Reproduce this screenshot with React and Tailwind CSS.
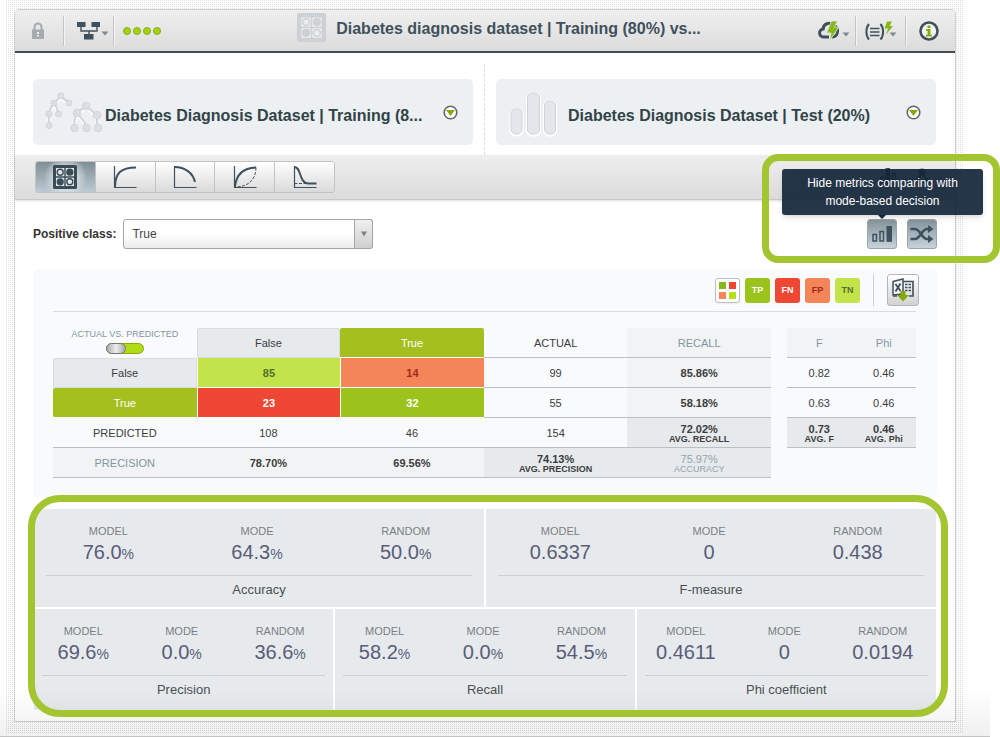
import React, { useState } from 'react';

// --- Icons ---
const LockIcon = () => (
  <svg width="14" height="18" viewBox="0 0 14 18">
    <path d="M3.500 8V5a3.500 3.500 0 0 1 7 0v3" fill="none" stroke="#a6abae" strokeWidth="2" />
    <rect x="1" y="7.500" width="12" height="9.500" rx="0.500" fill="#a6abae" />
    <path d="M6 10h2v2H6zM6 13h2v1.500H6z" fill="#eee" />
  </svg>
);

const NetworkIcon = () => (
  <svg width="26" height="20" viewBox="0 0 26 20">
    <path d="M5 4v6h16V4M13 10v4" fill="none" stroke="#3f515c" strokeWidth="1.400" />
    <path d="M1 1h8.500v5H1zM15.500 1H24v5h-8.500zM8 13h9.500v5.500H8z" fill="#3f515c" />
  </svg>
);

const Caret = () => (
  <svg width="8" height="5" viewBox="0 0 8 5">
    <path d="M0.500 0.500h7L4 4.500z" fill="#7a8a94" />
  </svg>
);

const MatrixIcon = ({ color, light, size }) => (
  <svg width={size} height={size} viewBox="0 0 24 24">
    <rect x="0" y="0" width="24" height="24" rx="1.500" fill={color} />
    <path d="M3 3h8.300v8.300H3zM12.700 3H21v8.300h-8.300zM3 12.700h8.300V21H3zM12.700 12.700H21V21h-8.300z" fill={light} />
    <circle cx="7.200" cy="7.200" r="3" fill={light} stroke={color} strokeWidth="1.400" />
    <circle cx="16.800" cy="7.200" r="3.600" fill={color} />
    <circle cx="7.200" cy="16.800" r="3.600" fill={color} />
    <circle cx="16.800" cy="16.800" r="3" fill={light} stroke={color} strokeWidth="1.400" />
  </svg>
);

const CloudIcon = () => (
  <svg width="24" height="22" viewBox="0 0 24 22">
    <path d="M11 17H6a4 4 0 0 1-.8-8A5.500 5.500 0 0 1 15 5.500a5 5 0 0 1 4.500 6c0 3-2 5.500-5.500 5.500" fill="none" stroke="#3f515c" strokeWidth="3" />
    <path d="M13.500 1h6l-3 6H21L11.500 21l1.500-8H8.500z" fill="#86b817" stroke="#e8e8e8" strokeWidth="0.800" />
  </svg>
);

const FormulaIcon = () => (
  <svg width="28" height="22" viewBox="0 0 28 22">
    <path d="M4 4c-3.500 4-3.500 11.500 0 15.500M15.500 4c3.500 4 3.500 11.500 0 15.500" fill="none" stroke="#3f515c" strokeWidth="2" />
    <path d="M5 8.500h9.500M5 12h9.500M5 15.500h9.500" stroke="#3f515c" strokeWidth="1.600" />
    <path d="M22 1.500h5L24.500 6H28l-7 8.500L23 8.500h-3.500z" fill="#86b817" />
  </svg>
);

const InfoIcon = () => (
  <svg width="20" height="20" viewBox="0 0 20 20">
    <circle cx="10" cy="10" r="8.500" fill="#f4f4f4" stroke="#3f515c" strokeWidth="2.600" />
    <path d="M8.500 4.500h3v2.500h-3zM7 8h4.500v5.800H13v1.700H7v-1.700h1.500v-4H7z" fill="#86a817" />
  </svg>
);

const EnsembleIcon = () => (
  <svg width="60" height="46" viewBox="0 0 60 46">
    <g fill="none" stroke="#fff" strokeWidth="4">
      <path d="M16 6L9 13C5 18 4 21 4 24v11M16 6l8 7M9 13c3 4 4 7 4.500 11M41 16l-9 7.500c-3 5-3 9-3 14.500M32 23.500C37 28 41 32 41.500 38M41 16l11 9v13" />
    </g>
    <g fill="none" stroke="#d3d6da" strokeWidth="2.400">
      <path d="M16 5L9 12C5 17 4 20 4 23v11M16 5l8 7M9 12c3 4 4 7 4.500 11M41 15l-9 7c-3 5-3 9-3 14.500M32 22C37 28 41 31 41.500 37M41 15l11 9v13" />
    </g>
    <g fill="#dcdee3" stroke="#cdd0d5" strokeWidth="0.800">
      <circle cx="16" cy="5" r="3" />
      <circle cx="24" cy="12" r="3" />
      <circle cx="9" cy="12" r="3" />
      <circle cx="4" cy="23" r="3" />
      <circle cx="13.500" cy="23" r="3" />
      <circle cx="4" cy="34.500" r="3" />
      <circle cx="41" cy="15" r="3.800" />
      <circle cx="32" cy="22" r="3.800" />
      <circle cx="52" cy="24" r="3.800" />
      <circle cx="29.500" cy="37" r="3.800" />
      <circle cx="41.500" cy="37" r="3.800" />
      <circle cx="53" cy="37" r="3.800" />
    </g>
  </svg>
);

const DatasetIcon = () => (
  <svg width="60" height="46" viewBox="1 2 60 46">
    <g fill="#e3e6eb" stroke="#fff" strokeWidth="3">
      <rect x="4" y="21" width="11" height="25" rx="4.500" />
      <rect x="20.500" y="4.500" width="12" height="41.500" rx="4.500" />
      <rect x="37.500" y="12.500" width="11" height="33.500" rx="4.500" />
    </g>
    <g fill="#e3e6eb" stroke="#cfd2d6" strokeWidth="1">
      <rect x="4" y="20" width="11" height="25" rx="4.500" />
      <rect x="20.500" y="4" width="12" height="41" rx="4.500" />
      <rect x="37.500" y="12" width="11" height="33" rx="4.500" />
    </g>
  </svg>
);

const CircleCaret = () => (
  <svg width="15" height="15" viewBox="0 0 15 15">
    <circle cx="7.500" cy="7.500" r="6.300" fill="#fff" stroke="#666" strokeWidth="1.600" />
    <path d="M3 5h9l-4.500 6z" fill="#86a80f" />
  </svg>
);

const CHARTS = {
  roc: <path d="M2 22C2 8 8 2.500 23 2.500" strokeWidth="2" />,
  pr: <path d="M1.500 2C12 2 20 8 22 17" strokeWidth="2" />,
  ks: (
    <>
      <path d="M2 22C3 10 9 3 23 2.500" strokeWidth="2" />
      <path d="M23 2.500C23 14 16 22 2 22" strokeWidth="1" strokeDasharray="3 1.500" />
    </>
  ),
  lift: (
    <>
      <path d="M1.500 2c7 0 4 16 14 16.500h8" strokeWidth="2" />
      <path d="M1.500 18.500h14" strokeWidth="1" strokeDasharray="3 1.500" />
    </>
  ),
};

const ChartIcon = ({ kind }) => (
  <svg width="24" height="24" viewBox="0 0 24 24" fill="none" stroke="#3f515c">
    <path d="M1.500 1v21.500h22" strokeWidth="1.200" />
    {CHARTS[kind]}
  </svg>
);

const BarsIcon = () => (
  <svg width="22" height="18" viewBox="0 0 22 18">
    <path d="M2 9.500h3.500v6.500H2zM9 6.500h3.500V16H9z" fill="none" stroke="#3f515c" strokeWidth="1.500" />
    <path d="M15.500 1H21v15.800h-5.500z" fill="#3f515c" />
  </svg>
);

const ShuffleIcon = () => (
  <svg width="24" height="18" viewBox="0 0 24 18" fill="none" stroke="#3f515c" strokeWidth="2.600">
    <path d="M0.500 4H5c5 0 7 10 12 10h2M0.500 14H5c5 0 7-10 12-10h2" />
    <path d="M18 0l5.500 4L18 8zM18 10l5.500 4-5.500 4z" fill="#3f515c" stroke="none" />
  </svg>
);

const ExportIcon = () => (
  <svg width="24" height="24" viewBox="0 0 24 24">
    <path d="M12 3.500h10V18h-4M6 18H2" fill="none" stroke="#3f515c" strokeWidth="1.600" />
    <path d="M14 6.500h2.500M14 9.500h2.500M14 12.500h2.500M17.500 6.500H20M17.500 9.500H20M17.500 12.500H20" stroke="#3f515c" strokeWidth="1.400" />
    <path d="M2 3.500L12 1v15l-10 1z" fill="#f2f2f2" stroke="#3f515c" strokeWidth="1.500" />
    <path d="M4.500 6l5 7M9.500 5.500l-5 8" stroke="#3f515c" strokeWidth="1.800" />
    <path d="M9.500 13h5v4h3.500L12 23.500 6 17h3.500z" fill="#86a80f" />
  </svg>
);

// --- Data ---
const METRICS_TOP = [
  { title: 'Accuracy', model: '76.0', mode: '64.3', random: '50.0', percent: true },
  { title: 'F-measure', model: '0.6337', mode: '0', random: '0.438' },
];

const METRICS_BOTTOM = [
  { title: 'Precision', model: '69.6', mode: '0.0', random: '36.6', percent: true },
  { title: 'Recall', model: '58.2', mode: '0.0', random: '54.5', percent: true },
  { title: 'Phi coefficient', model: '0.4611', mode: '0', random: '0.0194' },
];

const LEGEND = [
  { label: 'TP', style: 'bg-[#9cc31c] text-white' },
  { label: 'FN', style: 'bg-[#ee4733] text-white' },
  { label: 'FP', style: 'bg-[#f48559] text-[#a5281c]' },
  { label: 'TN', style: 'bg-[#c2e34a] text-[#56702a]' },
];

const TABS = [
  { id: 'matrix', label: 'Confusion matrix' },
  { id: 'roc', label: 'ROC curve' },
  { id: 'pr', label: 'Precision-recall curve' },
  { id: 'ks', label: 'Gain curve' },
  { id: 'lift', label: 'Lift curve' },
];

// --- Subcomponents ---
const Divider = () => <span className="h-[30px] w-0.5 border-l border-[#c4c4c4] bg-[#f4f4f4]" />;

const SourceCard = ({ icon, title }) => (
  <div className="flex h-[66px] min-w-0 flex-1 items-center rounded-[5px] bg-[#ecf0f3] pr-[15px] pl-3">
    <span className="shrink-0 pt-1">{icon}</span>
    <h2 className="min-w-0 flex-1 truncate pt-2 text-[16px] leading-5 font-bold text-[#324347]">{title}</h2>
    <button type="button" aria-label="Change source" className="shrink-0"><CircleCaret /></button>
  </div>
);

const Metric = ({ label, value, percent }) => (
  <div className="flex-1 text-center">
    <p className="text-[11px] leading-4 text-[#7c7f82]">{label}</p>
    <p className="text-[20px] leading-[26px] text-[#5a5c78]">
      {value}
      {percent && <span className="text-[14px] leading-none">%</span>}
    </p>
  </div>
);

const MetricCard = ({ metric, wide }) => (
  <section className={wide ? 'h-[98px] bg-[#e6eaed] pt-3.5' : 'h-[101px] bg-[#e6eaed] pt-3.5'}>
    <div className="flex pr-1">
      <Metric label="MODEL" value={metric.model} percent={metric.percent} />
      <Metric label="MODE" value={metric.mode} percent={metric.percent} />
      <Metric label="RANDOM" value={metric.random} percent={metric.percent} />
    </div>
    <h3 className={wide
      ? 'mx-3 mt-2.5 border-t border-[#cbd0d4] text-center text-[13px] leading-7 text-[#4c4f52]'
      : 'mx-2 mt-2.5 border-t border-[#cbd0d4] text-center text-[13px] leading-7 text-[#4c4f52]'}
    >
      {metric.title}
    </h3>
  </section>
);

const Summary = ({ value, label }) => (
  <>
    <span className="block text-[11px] leading-3">{value}</span>
    <span className="block text-[9px] leading-[8px]">{label}</span>
  </>
);

const CELL = 'h-[30px] p-0 text-center align-middle text-[11px] leading-4';
const LINE = 'border-b border-[#bdbfc1]';

const ConfusionTable = ({ swapped, setSwapped }) => (
  <table className="w-full table-fixed border-separate border-spacing-0 text-[#3c3c3c]">
    <tbody>
      <tr>
        <td className="h-[30px] p-0 text-center align-top">
          <label htmlFor="swap" className="block text-[9px] leading-3 text-[#83969f]">ACTUAL VS. PREDICTED</label>
          <input
            id="swap"
            type="checkbox"
            checked={swapped}
            onChange={(e) => setSwapped(e.target.checked)}
            className="mx-auto mt-[3px] block h-[11px] w-[38px] appearance-none rounded-full border border-[#8ba60f] bg-[#b0dc16] before:-mt-px before:-ml-px before:block before:h-[11px] before:w-5 before:rounded-full before:border before:border-[#777] before:bg-linear-to-r before:from-[#aaa] before:via-[#eee] before:to-[#aaa] checked:before:ml-[17px]"
          />
        </td>
        <th scope="col" className={`${CELL} rounded-t-xs border border-[#d9dbdc] bg-[#e6eaed] font-normal`}>False</th>
        <th scope="col" className={`${CELL} rounded-t-xs border-b border-white bg-[#a5bf1e] font-normal text-white`}>True</th>
        <th scope="col" className={`${CELL} ${LINE} font-normal`}>ACTUAL</th>
        <th scope="col" className={`${CELL} ${LINE} bg-[#f1f3f4] font-normal text-[#83969f]`}>RECALL</th>
      </tr>
      <tr>
        <th scope="row" className={`${CELL} rounded-l-xs border border-[#d9dbdc] bg-[#e6eaed] font-normal`}>False</th>
        <td className={`${CELL} border-b border-l border-white bg-[#c2e34a] font-bold text-[#56702a]`}>85</td>
        <td className={`${CELL} border-b border-l border-white bg-[#f48559] font-bold text-[#a5281c]`}>14</td>
        <td className={`${CELL} ${LINE}`}>99</td>
        <td className={`${CELL} ${LINE} bg-[#f1f3f4] font-bold`}>85.86%</td>
      </tr>
      <tr>
        <th scope="row" className={`${CELL} rounded-l-xs border-b border-white bg-[#a5bf1e] font-normal text-white`}>True</th>
        <td className={`${CELL} border-b border-l border-white bg-[#ee4733] font-bold text-white`}>23</td>
        <td className={`${CELL} border-b border-l border-white bg-[#9cc31c] font-bold text-white`}>32</td>
        <td className={`${CELL} ${LINE}`}>55</td>
        <td className={`${CELL} ${LINE} bg-[#f1f3f4] font-bold`}>58.18%</td>
      </tr>
      <tr>
        <th scope="row" className={`${CELL} ${LINE} font-normal`}>PREDICTED</th>
        <td className={`${CELL} ${LINE}`}>108</td>
        <td className={`${CELL} ${LINE}`}>46</td>
        <td className={`${CELL} ${LINE}`}>154</td>
        <td className={`${CELL} ${LINE} bg-[#e6eaed] font-bold`}><Summary value="72.02%" label="AVG. RECALL" /></td>
      </tr>
      <tr>
        <th scope="row" className={`${CELL} ${LINE} bg-[#f1f3f4] font-normal text-[#83969f]`}>PRECISION</th>
        <td className={`${CELL} ${LINE} bg-[#f1f3f4] font-bold`}>78.70%</td>
        <td className={`${CELL} ${LINE} bg-[#f1f3f4] font-bold`}>69.56%</td>
        <td className={`${CELL} ${LINE} bg-[#e6eaed] font-bold`}><Summary value="74.13%" label="AVG. PRECISION" /></td>
        <td className={`${CELL} ${LINE} bg-[#e6eaed] text-[#94a3ab]`}><Summary value="75.97%" label="ACCURACY" /></td>
      </tr>
    </tbody>
  </table>
);

const ScoreTable = () => (
  <table className="w-[129px] shrink-0 table-fixed border-separate border-spacing-0 text-[#3c3c3c]">
    <tbody>
      <tr>
        <th scope="col" className={`${CELL} ${LINE} bg-[#f1f3f4] font-normal text-[#83969f]`}>F</th>
        <th scope="col" className={`${CELL} ${LINE} bg-[#f1f3f4] font-normal text-[#83969f]`}>Phi</th>
      </tr>
      <tr>
        <td className={`${CELL} ${LINE}`}>0.82</td>
        <td className={`${CELL} ${LINE}`}>0.46</td>
      </tr>
      <tr>
        <td className={`${CELL} ${LINE}`}>0.63</td>
        <td className={`${CELL} ${LINE}`}>0.46</td>
      </tr>
      <tr>
        <td className={`${CELL} ${LINE} bg-[#e6eaed] font-bold`}><Summary value="0.73" label="AVG. F" /></td>
        <td className={`${CELL} ${LINE} bg-[#e6eaed] font-bold`}><Summary value="0.46" label="AVG. Phi" /></td>
      </tr>
    </tbody>
  </table>
);

const METRIC_BUTTON = 'flex size-[30px] items-center justify-center rounded-[3px] border border-[#9aa5aa] bg-linear-to-b from-[#85949a] to-[#c6d3db]';

// --- Main component ---
function App() {
  const [tab, setTab] = useState('matrix');
  const [positiveClass, setPositiveClass] = useState('True');
  const [swapped, setSwapped] = useState(false);

  return (
    <div className="relative bg-white pb-1 font-['Liberation_Sans',Arial,sans-serif]">
      <div className="mr-9 ml-[5px] bg-[conic-gradient(#dfdfdf_25%,#fff_25%)] bg-size-[2px_2px] pt-[9px] pr-2 pb-[11px] pl-[9px]">
        <main className="rounded-t-[5px] border border-[#cfcfcf] bg-white">
          <header className="flex h-[43px] items-center rounded-t-[4px] border-b-2 border-[#414c56] bg-linear-to-b from-[#efefef] to-[#dcdcdc]">
            <div className="flex w-[164px] shrink-0 items-center pl-4">
              <button type="button" aria-label="Privacy"><LockIcon /></button>
              <span className="w-[18px]" />
              <Divider />
              <button type="button" aria-label="Workflow" className="flex items-center pl-[11px]">
                <NetworkIcon />
                <span className="-ml-px pt-1.5"><Caret /></span>
              </button>
              <span className="w-1" />
              <Divider />
              <span className="flex gap-0.5 pl-2">
                <i className="size-2 rounded-full border border-[#8cab22] bg-[#a3d30c]" />
                <i className="size-2 rounded-full border border-[#8cab22] bg-[#a3d30c]" />
                <i className="size-2 rounded-full border border-[#8cab22] bg-[#a3d30c]" />
                <i className="size-2 rounded-full border border-[#8cab22] bg-[#a3d30c]" />
              </span>
            </div>
            <div className="flex min-w-0 flex-1 items-center justify-center gap-2.5 pb-1.5 pl-1">
              <span className="flex size-[29px] shrink-0 items-center justify-center rounded-xs bg-[#cdd1d4]">
                <MatrixIcon color="#cdd1d4" light="#eceded" size={27} />
              </span>
              <h1 className="truncate pt-0.5 text-[16px] leading-5 font-bold text-[#3f515c]">Diabetes diagnosis dataset | Training (80%) vs...</h1>
            </div>
            <div className="flex w-[140px] shrink-0 items-center pl-[3px]">
              <button type="button" aria-label="Cloud actions" className="flex items-center">
                <CloudIcon />
                <span className="pt-2"><Caret /></span>
              </button>
              <span className="w-[5px]" />
              <Divider />
              <button type="button" aria-label="Formula actions" className="flex items-center pl-2">
                <FormulaIcon />
                <span className="-ml-1 pt-2"><Caret /></span>
              </button>
              <span className="w-2" />
              <Divider />
              <button type="button" aria-label="Information" className="pl-3"><InfoIcon /></button>
            </div>
          </header>

          <div className="flex h-[102px] items-end pr-[19px] pl-[18px]">
            <div className="flex min-w-0 flex-1 pb-2.5">
              <SourceCard icon={<EnsembleIcon />} title="Diabetes Diagnosis Dataset | Training (8..." />
            </div>
            <div className="mx-[11px] h-[91px] border-l border-dashed border-[#dcdcdc]" />
            <div className="flex min-w-0 flex-1 pb-2.5">
              <SourceCard icon={<DatasetIcon />} title="Diabetes Diagnosis Dataset | Test (20%)" />
            </div>
          </div>

          <div className="flex h-[45px] items-center justify-between border-b border-[#c8c8c8] bg-linear-to-b from-[#eee] to-[#dcdcdc] pr-[22px] pl-5 shadow-sm">
            <div role="tablist" className="flex h-8 w-[300px] overflow-hidden rounded-[3px] border border-[#c3c3c3]">
              {TABS.map((item) => (
                <button
                  key={item.id}
                  type="button"
                  role="tab"
                  aria-label={item.label}
                  aria-selected={tab === item.id}
                  onClick={() => setTab(item.id)}
                  className={tab === item.id
                    ? 'flex flex-1 items-center justify-center border-r border-[#c3c3c3] bg-[radial-gradient(circle_at_center,#e4ecf0_20%,transparent_65%),linear-gradient(#7f8e94,#bccbd4)]'
                    : 'flex flex-1 items-center justify-center border-r border-[#c3c3c3] bg-linear-to-b from-white to-[#dadada] last:border-r-0'}
                >
                  {item.id === 'matrix' ? <MatrixIcon color="#3a4c56" light="#dfe6ea" size={24} /> : <ChartIcon kind={item.id} />}
                </button>
              ))}
            </div>
            <div className="flex gap-4 pr-0.5">
              <svg width="18" height="18" viewBox="0 0 18 18">
                <path d="M1.500 9.500h3V17h-3zM13.500 5.500h3V17h-3z" fill="none" stroke="#3f515c" strokeWidth="1.500" />
                <path d="M6.500 0h4.500v17.500H6.500z" fill="#3f515c" />
              </svg>
              <svg width="18" height="18" viewBox="0 0 18 18">
                <path d="M9 4L4 13M9 4l5 9" stroke="#3f515c" strokeWidth="2" />
                <circle cx="9" cy="4" r="3.500" fill="#3f515c" />
                <circle cx="4" cy="14" r="3.500" fill="#3f515c" />
                <circle cx="14" cy="14" r="3.500" fill="#3f515c" />
              </svg>
            </div>
          </div>

          <div className="relative flex h-[69px] items-center justify-between px-[18px] pb-0.5">
            <div className="flex items-center gap-[7px]">
              <label htmlFor="positive-class" className="text-[12px] font-bold text-[#333]">Positive class:</label>
              <div className="relative h-[30px] w-[250px]">
                <select
                  id="positive-class"
                  value={positiveClass}
                  onChange={(e) => setPositiveClass(e.target.value)}
                  className="size-full appearance-none rounded-[3px] border border-[#a5a5a5] bg-linear-to-b from-white from-50% to-[#ebebeb] pl-2 text-[12px] text-[#444]"
                >
                  <option value="True">True</option>
                  <option value="False">False</option>
                </select>
                <span className="pointer-events-none absolute inset-y-0 right-0 flex w-[19px] items-center justify-center rounded-r-[3px] border border-[#a5a5a5] bg-linear-to-b from-[#f0f0f0] to-[#cfcfcf]">
                  <svg width="6" height="6" viewBox="0 0 6 6"><path d="M0 0.500h6L3 5.500z" fill="#808080" /></svg>
                </span>
              </div>
            </div>
            <div className="relative flex gap-2.5">
              <button type="button" aria-label="Mode-based metrics" aria-describedby="mode-tip" className={METRIC_BUTTON}><BarsIcon /></button>
              <button type="button" aria-label="Random-based metrics" className={METRIC_BUTTON}><ShuffleIcon /></button>
              <div
                id="mode-tip"
                role="tooltip"
                className="absolute -right-[46px] bottom-[34px] w-[201px] rounded-[3px] bg-[#14253a]/92 py-[5px] text-center text-[12px] leading-[18px] text-white shadow-md"
              >
                Hide metrics comparing with<br />mode-based decision
                <span className="absolute top-full left-24 border-x-4 border-t-4 border-x-transparent border-t-[#14253a]" />
              </div>
            </div>
            <div className="pointer-events-none absolute -top-[46px] -right-[45px] h-[109px] w-[238px] rounded-[16px] border-[7px] border-[#a3c52f]" />
          </div>

          <div className="mx-[18px] rounded-[5px] bg-[#f9fafc] pr-[21px] pb-5 pl-5">
            <div className="flex items-center justify-end border-b border-[#d9dbdd] py-[5px]">
              <div className="flex gap-[5px]">
                <button type="button" aria-label="All cells" className="grid size-[25px] grid-cols-2 place-content-center place-items-center gap-[3px] rounded-[3px] border border-[#bdbdbd] bg-white px-[3px] shadow-xs">
                  <i className="size-[7px] bg-[#86b817]" />
                  <i className="size-[7px] bg-[#ee4733]" />
                  <i className="size-[7px] bg-[#f48559]" />
                  <i className="size-[7px] bg-[#b4e01c]" />
                </button>
                {LEGEND.map((item) => (
                  <button key={item.label} type="button" className={`size-[25px] rounded-[3px] pt-0.5 text-[9px] font-bold ${item.style}`}>{item.label}</button>
                ))}
              </div>
              <span className="mx-[13px] h-8 w-px bg-[#cdcfd1]" />
              <button type="button" aria-label="Export to Excel" className="-mr-[3px] flex size-8 items-center justify-center rounded-[3px] border border-[#b5b5b5] bg-linear-to-b from-white to-[#d2d2d2]"><ExportIcon /></button>
            </div>
            <div className="flex items-start gap-4 pt-4">
              <ConfusionTable swapped={swapped} setSwapped={setSwapped} />
              <ScoreTable />
            </div>
          </div>

          <div className="relative mx-[19px] my-[11px] flex flex-col gap-0.5">
            <div className="grid grid-cols-2 gap-0.5">
              {METRICS_TOP.map((metric) => <MetricCard key={metric.title} metric={metric} wide />)}
            </div>
            <div className="grid grid-cols-3 gap-0.5">
              {METRICS_BOTTOM.map((metric) => <MetricCard key={metric.title} metric={metric} />)}
            </div>
            <div className="pointer-events-none absolute -top-3.5 -right-3 -bottom-[7px] -left-1.5 z-10 rounded-[32px] border-[7px] border-[#a3c52f]" />
          </div>
        </main>
      </div>
      <div className="pointer-events-none absolute right-2.5 bottom-0 left-0 h-12 border-b border-[#c4c4c4] bg-linear-to-b from-transparent to-black/6" />
    </div>
  );
}

export default App;
